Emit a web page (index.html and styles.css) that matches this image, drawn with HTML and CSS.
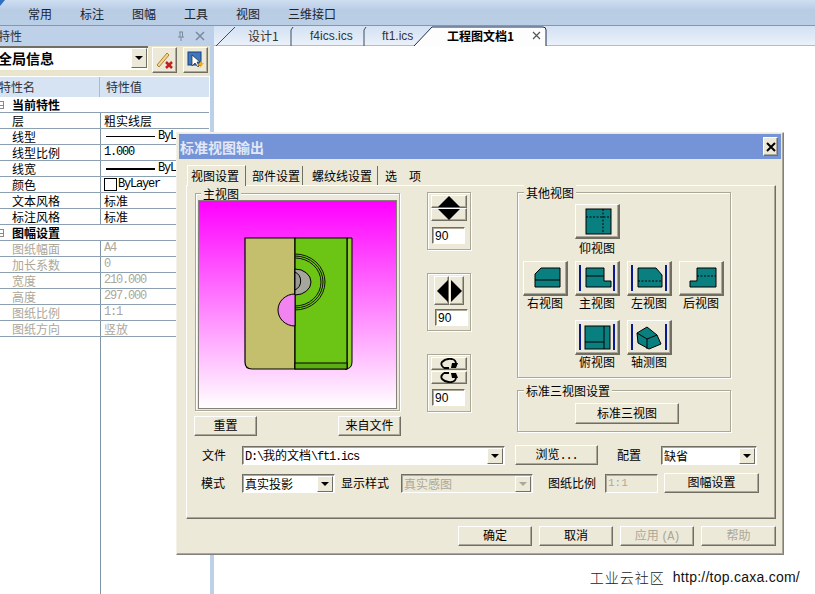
FILE: index.html
```html
<!DOCTYPE html>
<html lang="zh">
<head>
<meta charset="utf-8">
<title>标准视图输出</title>
<link rel="stylesheet" href="styles.css">
</head>
<body>
<div class="app">
  <div class="menubar">
    <svg class="logo" width="8" height="6" viewBox="0 0 8 6"><path d="M0 0H5L0 6Z" fill="#2f6fc0"/></svg>
    <span>常用</span><span>标注</span><span>图幅</span><span>工具</span><span>视图</span><span>三维接口</span>
  </div>
  <div class="work">
    <aside class="panel">
      <div class="panel-title">
        <span class="panel-name">特性</span>
        <svg width="10" height="10" viewBox="0 0 10 10" class="pin"><path d="M3 1H7M4 1V6M6.500 1V6M2 6H8M5 6V10" stroke="#7a8a9c" fill="none"/></svg>
        <svg width="10" height="10" viewBox="0 0 10 10" class="pclose"><path d="M1 1L9 9M9 1L1 9" stroke="#7a8a9c" stroke-width="1.500"/></svg>
      </div>
      <div class="selector">
        <div class="sel-combo"><b>全局信息</b><span class="arrow-btn"><i class="caret"></i></span></div>
        <button class="bevel tool">
          <svg width="20" height="20" viewBox="0 0 20 20"><path d="M2 15L12 3L14 5L4 17Z" fill="#f0d890" stroke="#b08030"/><path d="M11 12L17 18M17 12L11 18" stroke="#c02020" stroke-width="2.500"/></svg>
        </button>
        <button class="bevel tool second">
          <svg width="20" height="20" viewBox="0 0 20 20"><rect x="2" y="2" width="13" height="13" fill="#3a78c0" stroke="#1c3f78"/><path d="M6 5V16L9 13L12 17L13 16L11 12H14Z" fill="#fff" stroke="#222" stroke-width=".7"/><path d="M16 10L12 15H15L13 19L18 13H15Z" fill="#f0b020"/></svg>
        </button>
      </div>
      <div class="table">
        <div class="thead"><span class="c1">特性名</span><span class="c2">特性值</span></div>
        <div class="group-row"><i class="expander"></i><b>当前特性</b></div>
        <div class="row"><span class="c1">层</span><span class="c2">粗实线层</span></div>
        <div class="row"><span class="c1">线型</span><span class="c2 lined"><i class="ln thin"></i><span class="mono">ByLayer</span></span></div>
        <div class="row"><span class="c1">线型比例</span><span class="c2 mono">1.000</span></div>
        <div class="row"><span class="c1">线宽</span><span class="c2 lined"><i class="ln thick"></i><span class="mono">ByLayer</span></span></div>
        <div class="row"><span class="c1">颜色</span><span class="c2 lined"><i class="swatch"></i><span class="mono">ByLayer</span></span></div>
        <div class="row"><span class="c1">文本风格</span><span class="c2">标准</span></div>
        <div class="row"><span class="c1">标注风格</span><span class="c2">标准</span></div>
        <div class="group-row"><i class="expander"></i><b>图幅设置</b></div>
        <div class="row off"><span class="c1">图纸幅面</span><span class="c2 mono">A4</span></div>
        <div class="row off"><span class="c1">加长系数</span><span class="c2 mono">0</span></div>
        <div class="row off"><span class="c1">宽度</span><span class="c2 mono">210.000</span></div>
        <div class="row off"><span class="c1">高度</span><span class="c2 mono">297.000</span></div>
        <div class="row off"><span class="c1">图纸比例</span><span class="c2 mono">1:1</span></div>
        <div class="row off"><span class="c1">图纸方向</span><span class="c2">竖放</span></div>
        <div class="rest"></div>
      </div>
    </aside>
    <main class="docs">
      <div class="tabstrip">
        <svg class="tabshapes" width="601" height="21" viewBox="214 25 601 21">
          <path d="M216 46L235 27M291 46V30L293 27M364 46V30L366 27" stroke="#3c4c60" fill="none"/>
          <path d="M414 46L432 27H543Q546 27 546 30V46" stroke="#1c2c50" fill="#fdfdfd"/>
        </svg>
        <span class="doc t1">设计1</span>
        <span class="doc t2">f4ics.ics</span>
        <span class="doc t3">ft1.ics</span>
        <b class="doc t4">工程图文档1</b>
        <svg class="doc-x" width="9" height="9" viewBox="0 0 9 9"><path d="M1 1L8 8M8 1L1 8" stroke="#555" stroke-width="1.200"/></svg>
      </div>
      <div class="canvas"><p class="credit"><span class="credit-cn">工业云社区</span><span class="credit-url">http://top.caxa.com/</span></p></div>
    </main>
  </div>
</div>

<section class="dialog">
  <header class="dlg-title">
    <span>标准视图输出</span>
    <button class="bevel dlg-close"><svg width="10" height="10" viewBox="0 0 10 10"><path d="M1 1L9 9M9 1L1 9" stroke="#000" stroke-width="2"/></svg></button>
  </header>
  <nav class="dlg-tabs">
    <span class="dtab on">视图设置</span>
    <span class="dtab w2">部件设置</span>
    <span class="dtab w3">螺纹线设置</span>
    <span class="dtab w4">选<span class="sp">项</span></span>
  </nav>
  <div class="pane">
    <div class="top">
      <div class="col1">
        <div class="group g-main">
          <span class="legend">主视图</span>
          <div class="preview">
            <svg width="197" height="207" viewBox="199 201 197 207">
              <path d="M245 238H295V369H252Q245 369 245 362Z" fill="#c3bf6c" stroke="#000" stroke-width="1.200"/>
              <path d="M347 238H352V362Q352 369 345 369H347Z" fill="#8fce2c" stroke="#000"/>
              <path d="M295 238H347V369H295Z" fill="#6cc414" stroke="#000" stroke-width="1.200"/>
              <path d="M295 363H347V369H295Z" fill="#5cae14" stroke="#000"/>
              <path d="M295 294A17 16 0 0 0 295 326Z" fill="#f184f1" stroke="#000"/>
              <path d="M295 254A30 28 0 0 1 295 310M295 256A28 26 0 0 1 295 308M295 258A26 24 0 0 1 295 306" fill="none" stroke="#111"/>
              <path d="M295 269A16 13 0 0 1 295 295Z" fill="#a6a69c" stroke="#000"/>
              <path d="M295 272A10 10 0 0 1 295 290Z" fill="#9a9a94" stroke="#000"/>
            </svg>
          </div>
        </div>
        <div class="pv-actions">
          <button class="bevel btn w63">重置</button>
          <button class="bevel btn w63">来自文件</button>
        </div>
      </div>
      <div class="col2">
        <div class="rot">
          <button class="bevel rb"><svg width="24" height="11" viewBox="0 0 24 11"><path d="M12 0L23 11H1Z"/></svg></button>
          <button class="bevel rb"><svg width="24" height="11" viewBox="0 0 24 11"><path d="M12 11L23 0H1Z"/></svg></button>
          <input class="sunken num" value="90" readonly>
        </div>
        <div class="rot mid">
          <div class="lr">
            <button class="bevel rb-v"><svg width="12" height="22" viewBox="0 0 12 22"><path d="M1 11L12 0V22Z"/></svg></button>
            <button class="bevel rb-v"><svg width="12" height="22" viewBox="0 0 12 22"><path d="M11 11L0 0V22Z"/></svg></button>
          </div>
          <input class="sunken num shifted" value="90" readonly>
        </div>
        <div class="rot">
          <button class="bevel rb"><svg width="20" height="11" viewBox="0 0 20 11"><path d="M5 10H10M5 10Q1 7 3 4Q7 0 13 1Q17 2 17 6" fill="none" stroke="#000" stroke-width="1.800"/><path d="M13 5H19L17 10H12Z"/></svg></button>
          <button class="bevel rb lower"><svg width="20" height="11" viewBox="0 0 20 11"><path d="M5 1H10M5 1Q1 4 3 7Q7 11 13 10Q17 9 17 5" fill="none" stroke="#000" stroke-width="1.800"/><path d="M13 6H19L17 1H12Z"/></svg></button>
          <input class="sunken num third" value="90" readonly>
        </div>
      </div>
      <div class="col3">
        <div class="group g-views">
          <span class="legend">其他视图</span>
          <div class="vgrid">
            <figure class="view c2nd first">
              <button class="bevel vbtn"><svg width="32" height="30" viewBox="0 0 32 30"><rect x="5" y="3" width="25" height="25" fill="#0a7f80" stroke="#000"/><path d="M5 11H30M22 3V28" stroke="#000" stroke-dasharray="2 1.500"/></svg></button>
              <figcaption>仰视图</figcaption>
            </figure>
            <figure class="view c1st">
              <button class="bevel vbtn"><svg width="32" height="30" viewBox="0 0 32 30"><path d="M6 11L12 5H31V24H6Z" fill="#0a7f80" stroke="#000"/><path d="M6 17H31" stroke="#000"/></svg></button>
              <figcaption>右视图</figcaption>
            </figure>
            <figure class="view">
              <button class="bevel vbtn"><svg width="38" height="30" viewBox="0 0 38 30"><path d="M2 2V28M36 2V28" stroke="#0a1a90" stroke-width="2"/><path d="M8 5H26V18H33V24H8Z" fill="#0a7f80" stroke="#000"/><path d="M8 13H26" stroke="#000"/></svg></button>
              <figcaption>主视图</figcaption>
            </figure>
            <figure class="view">
              <button class="bevel vbtn"><svg width="38" height="30" viewBox="0 0 38 30"><path d="M2 2V28M36 2V28" stroke="#0a1a90" stroke-width="2"/><path d="M8 5H26L32 12V24H8Z" fill="#0a7f80" stroke="#000"/><path d="M8 18H32" stroke="#000" stroke-dasharray="2 1.500"/></svg></button>
              <figcaption>左视图</figcaption>
            </figure>
            <figure class="view">
              <button class="bevel vbtn"><svg width="32" height="30" viewBox="0 0 32 30"><path d="M12 5H31V24H5V18H12Z" fill="#0a7f80" stroke="#000"/><path d="M12 13H31" stroke="#000" stroke-dasharray="2 1.500"/></svg></button>
              <figcaption>后视图</figcaption>
            </figure>
            <figure class="view c2nd">
              <button class="bevel vbtn"><svg width="38" height="30" viewBox="0 0 38 30"><path d="M2 2V28M36 2V28" stroke="#0a1a90" stroke-width="2"/><rect x="7" y="4" width="25" height="23" fill="#0a7f80" stroke="#000"/><path d="M7 20H26M26 4V27" stroke="#000"/></svg></button>
              <figcaption>俯视图</figcaption>
            </figure>
            <figure class="view">
              <button class="bevel vbtn"><svg width="38" height="30" viewBox="0 0 38 30"><path d="M2 2V28M36 2V28" stroke="#0a1a90" stroke-width="2"/><path d="M7 11L17 5L27 13L31 22L19 27L8 21Z" fill="#0a7f80" stroke="#000"/><path d="M17 17L27 13M17 17V27M7 11L17 17" stroke="#000" fill="none"/></svg></button>
              <figcaption>轴测图</figcaption>
            </figure>
          </div>
        </div>
        <div class="group g-std">
          <span class="legend">标准三视图设置</span>
          <button class="bevel btn std">标准三视图</button>
        </div>
      </div>
    </div>
    <div class="form-row r1">
      <label class="l40">文件</label>
      <div class="combo w263"><span class="combo-val"><span class="mono">D:\</span>我的文档<span class="mono">\ft1.ics</span></span><span class="arrow-btn"><i class="caret"></i></span></div>
      <button class="bevel btn browse">浏览<span class="mono">...</span></button>
      <label class="l44">配置</label>
      <div class="combo w96"><span class="combo-val">缺省</span><span class="arrow-btn"><i class="caret"></i></span></div>
    </div>
    <div class="form-row r2">
      <label class="l41">模式</label>
      <div class="combo w93"><span class="combo-val">真实投影</span><span class="arrow-btn"><i class="caret"></i></span></div>
      <label class="l60">显示样式</label>
      <div class="combo w132 disabled"><span class="combo-val">真实感图</span><span class="arrow-btn"><i class="caret"></i></span></div>
      <label class="l57">图纸比例</label>
      <input class="sunken ratio" value="1:1" disabled>
      <button class="bevel btn setup">图幅设置</button>
    </div>
  </div>
  <footer class="dlg-foot">
    <button class="bevel btn f74">确定</button>
    <button class="bevel btn f74">取消</button>
    <button class="bevel btn f74 dis">应用 <span class="mono">(A)</span></button>
    <button class="bevel btn f75 dis">帮助</button>
  </footer>
</section>
</body>
</html>
```

FILE: styles.css
```css
* { box-sizing: border-box; }
html, body { margin: 0; padding: 0; }
body {
  width: 815px; height: 594px; overflow: hidden; background: #fff; color: #000;
  font: 12px/16px "Noto Sans CJK SC", "Liberation Sans", sans-serif;
  position: relative;
}
button, input { font: inherit; color: inherit; margin: 0; padding: 0; }
figure { margin: 0; }
.mono { font-family: "Liberation Mono", "Noto Sans CJK SC", monospace; font-size: 12px; letter-spacing: -1.2px; }

.app { display: flex; flex-direction: column; height: 594px; }
.menubar {
  position: relative; height: 26px; flex: none; display: flex; align-items: center; gap: 28px;
  padding: 3px 0 0 28px; background: linear-gradient(#cfdff2, #b8cce4 40%, #bacee6);
  border-bottom: 1px solid #7f98b8; color: #1c2430;
}
.logo { position: absolute; left: 0; top: 0; }
.work { flex: 1; display: flex; min-height: 0; }

.panel { width: 214px; flex: none; border-right: 4px solid #bcd0e8; display: flex; flex-direction: column; overflow: hidden; }
.panel-title { height: 20px; flex: none; background: #bed1e8; display: flex; align-items: center; color: #2a3240; }
.panel-name { margin-left: -2px; flex: 1; }
.pin { margin-right: 9px; }
.pclose { margin-right: 5px; }
.selector { height: 30px; flex: none; background: #e9e5cd; display: flex; align-items: flex-start; }
.sel-combo {
  width: 148px; height: 24px; background: #fff; display: flex; align-items: center; justify-content: space-between;
  border-top: 2px solid #716f64; padding: 0 1px 2px 0;
}
.sel-combo b { font-size: 14px; margin-left: -2px; }
.arrow-btn {
  width: 16px; height: 100%; background: #ece9d8; display: flex; align-items: center; justify-content: center; flex: none;
  border: 1px solid; border-color: #fff #716f64 #716f64 #fff;
}
.caret { width: 0; height: 0; border: 4px solid transparent; border-top-color: #000; border-bottom: 0; }
.tool { width: 25px; height: 26px; margin: 1px 0 0 4px; display: flex; align-items: center; justify-content: center; }
.tool.second { margin-left: 6px; }
.table { flex: 1; display: flex; flex-direction: column; width: 209px; }
.thead { height: 21px; flex: none; background: #d5e3f3; display: flex; border-top: 1px solid #fff; align-items: center; color: #2a3240; }
.thead .c1 { width: 101px; padding-left: 0; margin-left: -1px; height: 100%; line-height: 20px; border-right: 1px solid #a9bccd; }
.thead .c2 { padding-left: 6px; }
.group-row { height: 16px; flex: none; display: flex; align-items: center; padding-left: 12px; border-bottom: 1px solid #8ca0b2; position: relative; }
.group-row b { font-size: 12px; }
.expander { position: absolute; left: -4px; top: 4px; width: 8px; height: 8px; border: 1px solid #888; background: linear-gradient(#888, #888) center / 6px 1px no-repeat; }
.row { height: 16px; flex: none; display: flex; border-bottom: 1px solid #8ca0b2; line-height: 15px; }
.c1 { width: 101px; flex: none; padding-left: 12px; border-right: 1px solid #7f94a6; white-space: nowrap; }
.c2 { padding-left: 3px; white-space: nowrap; flex: 1; overflow: hidden; }
.lined { display: flex; align-items: center; }
.ln { width: 49px; margin: 0 3px 0 2px; background: #000; flex: none; }
.ln.thin { height: 1px; }
.ln.thick { height: 2px; }
.swatch { width: 13px; height: 13px; border: 1px solid #000; background: #fff; margin-right: 1px; flex: none; }
.off { color: #aca899; }
.rest { flex: 1; width: 101px; border-right: 1px solid #7f94a6; }

.docs { flex: 1; display: flex; flex-direction: column; min-width: 0; }
.tabstrip {
  position: relative; height: 20px; flex: none; display: flex; align-items: center; padding-left: 34px;
  background: linear-gradient(#d3e1f3, #eaf1f9); border-bottom: 1px solid #b8bcc0; color: #333;
}
.tabshapes { position: absolute; left: 0; top: -1px; }
.doc { position: relative; flex: none; white-space: nowrap; }
.t1 { width: 62px; }
.t2 { width: 72px; font-family: "Liberation Sans", sans-serif; }
.t3 { width: 65px; font-family: "Liberation Sans", sans-serif; }
.t4 { width: 85px; color: #000; }
.doc-x { position: relative; flex: none; }
.canvas { flex: 1; display: flex; align-items: flex-end; justify-content: flex-end; }
.credit { margin: 0 15px 8px 0; display: flex; gap: 9px; font-size: 14px; line-height: 18px; color: #222; }
.credit-cn { letter-spacing: 1px; font-weight: 300; margin-right: -1px; }
.credit-url { font-family: "Liberation Sans", sans-serif; letter-spacing: .25px; color: #111; }

.bevel { background: #ece9d8; border: 1px solid; border-color: #fff #716f64 #716f64 #fff; box-shadow: inset -1px -1px #aca899; }
.sunken { background: #fff; border: 1px solid; border-color: #716f64 #fff #fff #716f64; box-shadow: inset 1px 1px #aca899; }

.dialog {
  position: absolute; left: 176px; top: 132px; width: 608px; height: 423px; background: #ece9d8;
  border: 1px solid; border-color: #f4f2e8 #808080 #808080 #f4f2e8; padding: 1px 2px 0 2px;
  display: flex; flex-direction: column; box-shadow: inset -1px -1px #aca899;
}
.dlg-title {
  height: 25px; flex: none; background: #7594d8; color: #e2e8f6; font-weight: 700; font-size: 14px;
  display: flex; align-items: center; justify-content: space-between; padding: 0 3px 0 1px;
}
.dlg-close { width: 15px; height: 19px; display: flex; align-items: center; justify-content: center; }
.dlg-tabs { height: 26px; flex: none; display: flex; align-items: flex-end; padding-left: 8px; }
.dtab { height: 19px; line-height: 19px; border-right: 1px solid #716f64; padding-left: 4px; flex: none; width: 55px; margin-right: 3px; white-space: nowrap; }
.dtab.on { width: 59px; height: 21px; line-height: 20px; background: #ece9d8; border-top: 1px solid #fff; border-left: 1px solid #fff; margin-bottom: -1px; position: relative; margin-right: 2px; padding-left: 3px; }
.w2 { width: 55px; padding-left: 4px; }
.w3 { width: 72px; padding-left: 6px; }
.w4 { width: 48px; border-right: 0; padding-left: 4px; }
.sp { margin-left: 12px; }
.pane {
  width: 590px; height: 334px; flex: none; margin-left: 7px; border: 1px solid; border-color: #fff #716f64 #716f64 #fff;
  box-shadow: inset -1px -1px #aca899; padding: 6px 0 0 7px;
}
.top { display: flex; height: 244px; }
.col1 { width: 207px; flex: none; margin-right: 26px; }
.col2 { width: 44px; flex: none; margin-right: 46px; }
.col3 { width: 214px; flex: none; }
.group { border: 1px solid #aca899; box-shadow: 1px 1px #fff, inset 1px 1px #fff; }
.legend { display: table; margin: -8px 0 0 6px; padding: 0 2px; background: #ece9d8; line-height: 15px; }
.g-main { width: 205px; height: 218px; margin: 1px 0 0 1px; }
.g-main .legend { margin-left: 5px; }
.preview { width: 197px; height: 207px; margin: 0 0 0 3px; background: linear-gradient(#ff00ff, #fff); box-shadow: 0 0 0 1px #85807a; }
.preview svg { display: block; }
.pv-actions { display: flex; justify-content: space-between; margin-top: 5px; }
.btn { height: 20px; line-height: 16px; padding-bottom: 2px; display: block; white-space: nowrap; }
.w63 { width: 63px; }
.rot { width: 44px; height: 58px; border: 1px solid #aca899; box-shadow: 1px 1px #fff, inset 1px 1px #fff; padding: 2px 0 0 3px; margin-bottom: 23px; }
.rb { width: 36px; height: 13px; display: flex; align-items: center; justify-content: center; overflow: hidden; }
.rb.lower { margin-top: 1px; }
.rb svg { display: block; flex: none; }
.rb-v { width: 15px; height: 29px; display: flex; align-items: center; justify-content: center; overflow: hidden; }
.lr { display: flex; margin-left: 3px; }
.num { display: block; width: 33px; height: 17px; margin: 6px 0 0 1px; padding: 1px 0 0 2px; font-family: "Liberation Sans", sans-serif; font-size: 12px; line-height: 14px; }
.shifted { margin: 4px 0 0 4px; }
.third { margin-top: 5px; }
.g-views { width: 214px; height: 186px; }
.vgrid { display: grid; grid-template-columns: repeat(4, 44px); column-gap: 8px; grid-template-rows: 57px 59px 59px; padding: 4px 0 0 5px; }
.view { display: flex; flex-direction: column; align-items: center; }
.view.c2nd { grid-column: 2; }
.view.c1st { grid-column: 1; }
.vbtn { width: 45px; height: 35px; flex: none; display: flex; align-items: center; justify-content: center; border-width: 1px 2px 2px 1px; padding: 0; }
.view figcaption { margin-top: -1px; line-height: 16px; white-space: nowrap; }
.view.first figcaption { margin-top: 1px; }
.g-std { width: 214px; height: 42px; margin-top: 12px; }
.std { width: 104px; height: 21px; margin: 5px 0 0 57px; }
.form-row { display: flex; align-items: center; height: 20px; }
.r1 { margin: 9px 0 0 8px; }
.r2 { margin: 8px 0 0 7px; }
label { flex: none; white-space: nowrap; }
.l40 { width: 40px; }
.l41 { width: 41px; }
.l44 { width: 44px; margin-left: 19px; }
.l60 { width: 60px; margin-left: 6px; }
.l57 { width: 57px; margin-left: 15px; }
.combo { height: 19px; background: #fff; border: 1px solid; border-color: #716f64 #fff #fff #716f64; box-shadow: inset 1px 1px #aca899; display: flex; align-items: center; justify-content: space-between; padding: 1px 1px 0 2px; flex: none; }
.combo-val { white-space: nowrap; line-height: 15px; }
.combo .arrow-btn { height: 16px; }
.w263 { width: 263px; }
.w96 { width: 96px; }
.w93 { width: 93px; }
.w132 { width: 132px; }
.disabled { background: #ece9d8; color: #aca899; }
.disabled .caret { border-top-color: #aca899; }
.browse { width: 83px; margin-left: 10px; }
.ratio { width: 53px; height: 19px; flex: none; background: #ece9d8; color: #aca899; padding-left: 2px; font-size: 11px; font-family: "Liberation Mono", monospace; }
.setup { width: 95px; margin-left: 6px; }
.dlg-foot { display: flex; justify-content: flex-end; gap: 7px; padding: 7px 5px 0 0; }
.f74 { width: 74px; }
.f75 { width: 75px; }
.dis { color: #aca899; }
```
